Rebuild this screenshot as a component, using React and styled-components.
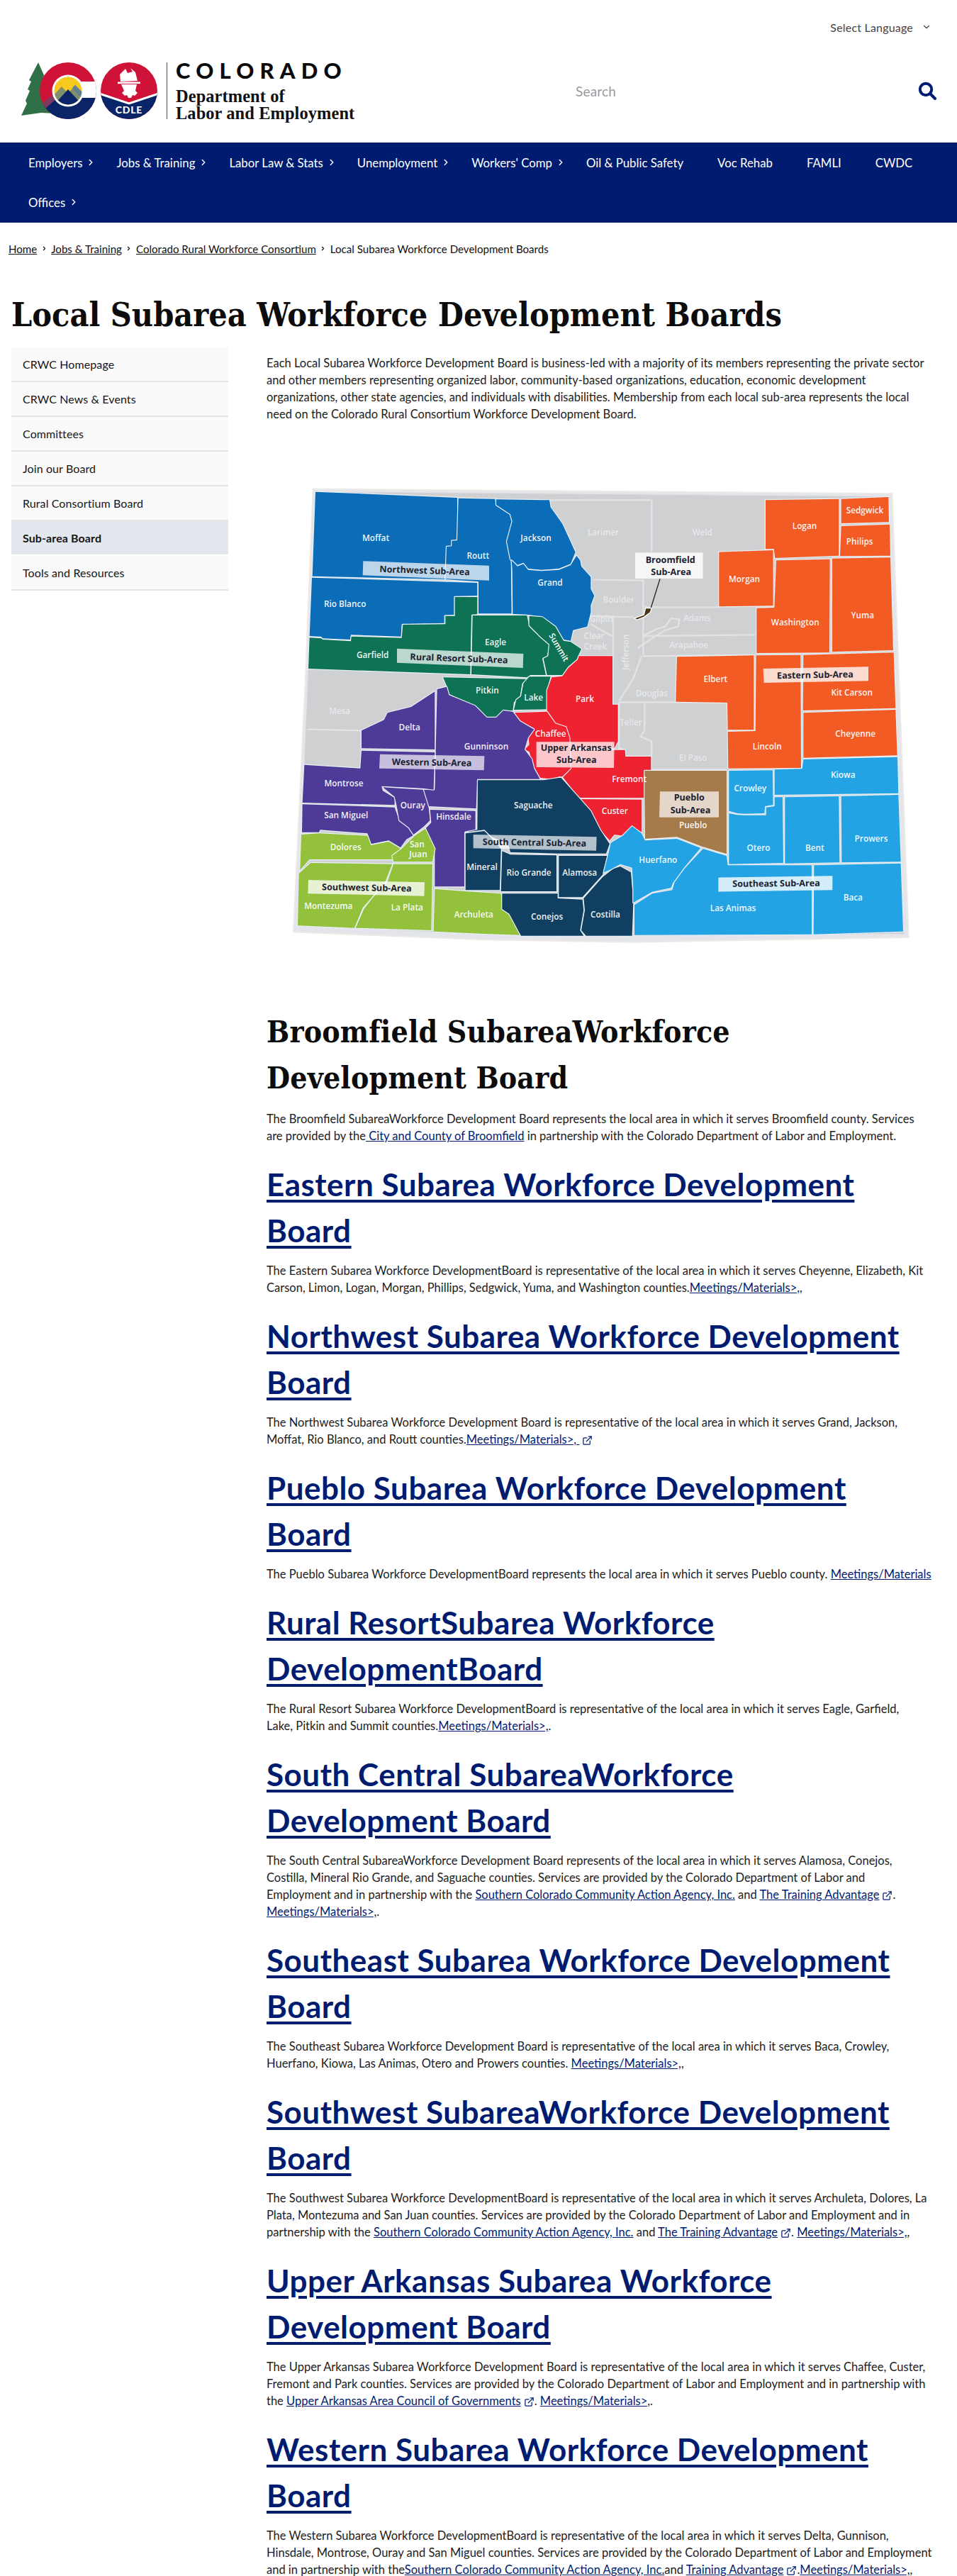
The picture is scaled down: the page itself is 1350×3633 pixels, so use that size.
import React from 'react';
import styled, { createGlobalStyle } from 'styled-components';
import { ChevronRight, ChevronDown, ExternalLink } from 'lucide-react';

const NAVY = '#001c70';

const Global = createGlobalStyle`
  html, body { margin: 0; padding: 0; background: #fff; }
  body { font-family: "Lato", "Liberation Sans", sans-serif; font-size: 16.5px; color: #1c1c1c; }
`;

const Page = styled.div`width: 1350px; height: 3633px; overflow: hidden;`;
const TopBar = styled.div`height: 76px; display: flex; justify-content: flex-end; align-items: center; gap: 12px; padding-right: 36px; color: #444; font-size: 16px; letter-spacing: .2px;`;
const Header = styled.header`height: 125px; padding: 12px 29px 33px 30px; box-sizing: border-box; display: flex; align-items: center; justify-content: space-between;`;
const Brand = styled.div`display: flex; align-items: stretch; height: 80px;`;
const Divider = styled.div`width: 1px; background: #555; margin: 0 12px 0 0;`;
const BrandText = styled.div`display: flex; flex-direction: column; margin-top: -1px;`;
const StateName = styled.div`font-family: "Lato", sans-serif; font-weight: 900; font-size: 31px; line-height: 24px; letter-spacing: 8.2px; color: #0b0b0b; margin-bottom: 13px;`;
const Dept = styled.div`font-family: "Liberation Serif", serif; font-weight: 700; font-size: 24.4px; line-height: 24px; letter-spacing: .1px; color: #111; white-space: nowrap;`;
const SearchBox = styled.div`width: 509px; display: flex; align-items: center; justify-content: space-between;`;
const SearchHint = styled.span`color: #9a9a9a; font-size: 19px; letter-spacing: .2px;`;

const Nav = styled.nav`background: ${NAVY}; display: flex; flex-wrap: wrap; padding: 0 16px; height: 113px; box-sizing: border-box; align-content: flex-start;`;
const NavItem = styled.a`height: 56px; display: flex; align-items: center; padding: 0 24px; color: #fff; white-space: nowrap; font-size: 16.8px;`;
const NavChevron = styled(ChevronRight)`width: 14px; height: 14px; margin: 0 -19px 0 5px; flex: none;`;
const NavWrap = styled.div`flex-basis: 100%; height: 0;`;

const Crumbs = styled.div`display: flex; align-items: center; gap: 5.5px; padding: 25px 12px 0; height: 48px; box-sizing: border-box; line-height: 24px; color: #111; font-size: 15.1px;`;
const CrumbLink = styled.a`color: #111; text-decoration: underline;`;
const Title = styled.h1`font-family: "DejaVu Serif Condensed", "DejaVu Serif", serif; font-size: 46.3px; font-weight: 700; line-height: 60px; letter-spacing: 0; margin: 0; padding: 52px 16px 16px; color: #0c0c0c;`;

const Body = styled.div`display: grid; grid-template-columns: 306px 940px; column-gap: 54px; padding-left: 16px;`;
const Side = styled.ul`list-style: none; margin: 0; padding: 0; align-self: start; font-size: 16px; letter-spacing: .1px;`;
const SideItem = styled.li`height: 49px; box-sizing: border-box; display: flex; align-items: center; padding-left: 16px; background: ${p => (p.$active ? '#e3e7ee' : '#fafafa')}; border-bottom: 2px solid ${p => (p.$active ? '#fff' : '#e4e4e4')}; font-weight: ${p => (p.$active ? 700 : 400)}; color: #161616;`;

const Main = styled.main`display: block;`;
const Intro = styled.p`margin: 10px 0 0; line-height: 24px; width: 932px;`;
const MapSvg = styled.svg`display: block; width: 920px; height: 670px; margin: 71px 0 86px 24px;`;

const Section = styled.section`margin-bottom: 24px;`;
const PlainHead = styled.h2`font-family: "DejaVu Serif Condensed", "DejaVu Serif", serif; font-size: 42.4px; font-weight: 700; line-height: 65px; letter-spacing: .15px; margin: 0 0 13px; width: 700px; color: #0c0c0c;`;
const LinkHead = styled.h2`font-size: 44px; font-weight: 700; line-height: 65px; letter-spacing: .5px; margin: 0 0 12px; width: 935px;`;
const HeadLink = styled.a`color: ${NAVY}; text-decoration: underline; text-decoration-thickness: 4px; text-underline-offset: 5px;`;
const Para = styled.p`margin: 0; line-height: 24px; width: 932px; white-space: ${p => (p.$nowrap ? 'nowrap' : 'normal')};`;
const A = styled.a`color: ${NAVY}; text-decoration: underline;`;
const ExtIcon = styled(ExternalLink)`width: 15px; height: 15px; margin: 0 0 -3px 4px; color: ${NAVY};`;

const Ext = () => <ExtIcon strokeWidth={2} />;
const Meet = ({ children }) => <A>{children || 'Meetings/Materials>,'}</A>;

const state = '135,80 2560,100 2625,1950 1480,1958 850,1952 60,1915 105,828 110,690';
const regions = [
  ['#0b6cb8', ['135,80 735,105 735,285 712,287 712,310 690,312 685,450 122,437',
    '740,107 895,110 900,135 960,175 968,205 945,290 962,350 965,595 825,595 825,460 685,450 690,312 712,310 712,287 735,285',
    '900,112 1125,115 1130,145 1180,215 1235,335 1215,385 1165,405 1090,410 1035,405 1015,380 990,390 960,365 945,290 968,205 960,175 900,135',
    '965,370 990,395 1015,385 1035,410 1090,415 1165,410 1215,390 1240,350 1255,370 1260,395 1300,440 1300,490 1315,520 1300,560 1300,590 1285,650 1225,665 1215,710 1185,705 1150,650 1095,610 1035,600 970,597 968,410',
    '120,443 820,465 820,520 722,522 722,600 680,602 680,635 500,640 497,692 285,685 283,705 165,700 160,693 110,690']],
  ['#0d7354', ['110,697 160,700 165,705 285,712 287,692 500,698 505,642 685,640 685,605 725,605 725,525 820,525 820,598 795,600 790,852 105,828',
    '800,603 1030,603 1040,650 1090,700 1125,730 1115,775 1095,785 1110,855 1045,855 1030,865 795,852',
    '1040,605 1095,610 1150,650 1185,710 1215,715 1260,745 1240,790 1205,820 1180,855 1115,855 1100,785 1120,775 1125,725 1090,695 1040,645',
    '675,865 1030,872 1010,890 1000,950 975,970 970,1005 930,1005 900,1035 860,1035 825,995 810,985 700,935 690,900',
    '1040,862 1110,862 1130,862 1115,920 1115,1000 975,1002 985,960 1005,945 1015,890']],
  ['#ee2230', ['1135,865 1180,860 1205,825 1245,790 1250,775 1392,775 1392,980 1415,980 1415,1135 1400,1165 1215,1165 1195,1075 1150,1060 1115,1020 1115,920',
    '1400,1172 1445,1172 1447,1200 1555,1200 1555,1375 1250,1375 1180,1285 1215,1250 1210,1172',
    '975,1015 1115,1010 1150,1060 1195,1075 1210,1120 1215,1250 1180,1285 1165,1285 1140,1295 1085,1290 1060,1250 1040,1180 1020,1170 1040,1150 1035,1110 1060,1080 1000,1050',
    '1255,1380 1515,1382 1515,1520 1475,1495 1435,1535 1400,1530 1380,1555 1340,1510 1300,1430']],
  ['#4e3a97', ['330,1090 425,1045 440,1015 540,990 640,925 640,1170 330,1165',
    '650,915 690,905 700,940 810,985 860,1035 900,1035 930,1005 970,1010 1000,1050 1060,1085 1035,1120 1020,1170 1050,1210 1060,1250 1085,1295 820,1295 815,1420 610,1410 590,1340 640,1340',
    '330,1175 640,1182 635,1340 595,1335 415,1325 420,1345 470,1375 470,1405 80,1395 88,1235 325,1250',
    '80,1402 470,1415 490,1470 530,1500 555,1530 520,1550 495,1585 445,1555 370,1570 355,1525 155,1510 150,1520 78,1520',
    '420,1330 590,1340 615,1420 620,1470 595,1495 550,1530 530,1500 490,1470 478,1405 470,1370',
    '620,1425 812,1430 812,1510 765,1520 765,1750 640,1750 640,1590 600,1505 625,1480']],
  ['#93c13c', ['75,1530 150,1525 355,1535 370,1575 445,1560 495,1590 460,1635 110,1635 70,1680',
    '600,1505 640,1590 630,1645 465,1645 460,1620 500,1590 555,1535',
    '65,1695 115,1650 460,1655 430,1730 370,1800 335,1840 300,1925 60,1915',
    '465,1655 630,1655 625,1935 305,1925 340,1845 375,1800 440,1730',
    '640,1760 765,1770 920,1780 925,1845 955,1870 1000,1955 850,1950 635,1940']],
  ['#113f61', ['822,1300 1100,1300 1165,1290 1175,1290 1300,1430 1340,1510 1380,1570 1365,1610 1160,1610 960,1605 950,1570 880,1540 850,1510 770,1520 820,1510',
    '770,1525 850,1515 880,1545 920,1590 915,1765 770,1765 770,1640',
    '925,1600 960,1615 1155,1618 1155,1770 920,1770',
    '1165,1620 1370,1620 1350,1700 1265,1795 1165,1795',
    '925,1780 1160,1780 1160,1800 1265,1805 1270,1850 1255,1935 1270,1958 1005,1958 955,1865 925,1845',
    '1270,1800 1350,1710 1395,1675 1425,1665 1470,1690 1475,1750 1480,1820 1475,1958 1280,1958 1260,1935 1275,1850']],
  ['#a67b4a', ['1528,1260 1875,1260 1875,1612 1770,1580 1665,1540 1530,1548 1528,1380']],
  ['#f35b25', ['2040,115 2350,110 2350,350 2080,360 2075,322 2040,322',
    '2360,110 2560,102 2562,208 2360,213',
    '2360,225 2565,218 2568,350 2355,352',
    '1843,335 2072,327 2072,562 1843,565',
    '2085,370 2312,365 2310,760 2002,762 2002,572 2077,570',
    '2322,362 2568,358 2580,750 2322,757',
    '1665,778 1990,772 1990,1087 1880,1087 1878,972 1660,968',
    '2000,772 2188,770 2190,1248 1882,1250 1880,1095 1997,1092',
    '2200,770 2582,760 2590,995 2198,1005',
    '2200,1015 2590,1002 2597,1195 2200,1205']],
  ['#23a3e3', ['2078,1255 2195,1252 2200,1212 2598,1202 2602,1355 2078,1362',
    '1885,1260 2070,1258 2072,1405 2038,1410 2035,1440 1950,1442 1920,1440 1885,1430',
    '1885,1440 1920,1447 1950,1448 2042,1448 2042,1415 2078,1410 2078,1372 2112,1372 2115,1650 1885,1655',
    '2122,1372 2350,1368 2353,1648 2122,1652',
    '2360,1368 2602,1362 2612,1645 2362,1648',
    '2245,1660 2612,1652 2622,1940 2243,1952',
    '1485,1828 1560,1780 1645,1765 1655,1730 1700,1670 1775,1590 1875,1620 1880,1660 2235,1660 2235,1952 1485,1955',
    '1385,1565 1435,1535 1475,1495 1515,1525 1530,1555 1665,1548 1765,1587 1695,1670 1648,1735 1640,1755 1560,1772 1480,1818 1480,1760 1475,1670 1425,1655 1380,1680 1355,1690 1375,1610']],
];
const greyLines = [
  '1558,115 1558,335', '1310,452 1520,455', '1522,450 1522,770', '1295,605 1480,610', '1525,568 1843,568',
  '1520,690 1995,685', '1520,775 1995,770', '1395,610 1395,775', '1515,775 1480,870 1420,965', '1300,640 1390,690',
  '1420,970 1875,970', '1528,975 1528,1090 1510,1115 1558,1135 1558,1200', '1558,1255 1875,1255',
  '1520,690 1580,660 1615,650 1640,615 1675,620 1670,650 1615,665 1560,700 1500,740',
  '1125,115 1558,115', '330,1090 100,1085', '1420,970 1420,1165 1445,1172',
];
const names = [
  ['Moffat',390,287],['Routt',823,364],['Jackson',1068,288],['Grand',1128,476],['Rio Blanco',260,567],['Eagle',897,730],['Garfield',377,783],
  ['Pitkin',862,932],['Lake',1058,964],['Park',1275,970],['Delta',533,1088],['Gunninson',858,1170],['Chaffee',1130,1115],
  ['Elbert',1828,884],['Morgan',1950,462],['Logan',2205,236],['Sedgwick',2460,170],['Philips',2438,302],['Washington',2165,645],['Yuma',2450,614],
  ['Kit Carson',2405,941],['Cheyenne',2420,1115],['Lincoln',2047,1170],['Kiowa',2368,1290],['Crowley',1975,1348],['Prowers',2487,1560],['Otero',2010,1598],
  ['Bent',2248,1598],['Baca',2410,1810],['Las Animas',1902,1855],['Huerfano',1585,1650],['Pueblo',1733,1502],['Fremont',1463,1308],['Custer',1402,1443],
  ['Saguache',1057,1418],['Montrose',255,1325],['Ouray',547,1418],['San Miguel',265,1460],['Hinsdale',720,1468],['Dolores',263,1597],['San',565,1583],['Juan',570,1627],
  ['Mineral',840,1680],['Rio Grande',1038,1703],['Alamosa',1253,1703],['Montezuma',190,1846],['La Plata',523,1850],['Archuleta',805,1880],['Conejos',1115,1890],['Costilla',1362,1880],
];
const greyNames = [['Larimer',1353,265],['Weld',1772,265],['Boulder',1418,548],['Gilpin',1345,630],['Clear',1315,703],['Creek',1320,748],['Mesa',237,1020],['Teller',1470,1068],['El Paso',1733,1218],['Douglas',1558,945],['Adams',1750,626],['Arapahoe',1715,742]];
const tags = [
  { pts: '337,373 870,392 870,455 335,433', lines: [['Northwest Sub-Area', 597, 426, 2]], a: .72 },
  { pts: '480,743 1015,765 1013,825 480,803', lines: [['Rural Resort Sub-Area', 742, 798, 2]], a: .72 },
  { pts: '1488,337 1775,337 1775,447 1488,447', lines: [['Broomfield', 1637, 380, 0], ['Sub-Area', 1640, 433, 0]], a: .8 },
  { pts: '2030,828 2475,820 2475,880 2033,888', lines: [['Eastern Sub-Area', 2250, 868, -1]], a: .78 },
  { pts: '408,1190 850,1198 848,1258 405,1250', lines: [['Western Sub-Area', 627, 1238, 1]], a: .68 },
  { pts: '1070,1138 1400,1138 1398,1248 1070,1245', lines: [['Upper Arkansas', 1238, 1175, 0], ['Sub-Area', 1240, 1228, 0]], a: .75 },
  { pts: '1593,1348 1842,1348 1842,1457 1590,1457', lines: [['Pueblo', 1717, 1387, 0], ['Sub-Area', 1722, 1440, 0]], a: .7 },
  { pts: '803,1530 1325,1540 1323,1598 803,1588', lines: [['South Central Sub-Area', 1062, 1577, 1]], a: .68 },
  { pts: '105,1722 597,1732 595,1790 103,1780', lines: [['Southwest Sub-Area', 352, 1768, 1]], a: .78 },
  { pts: '1840,1712 2323,1705 2323,1765 1840,1772', lines: [['Southeast Sub-Area', 2085, 1750, -.5]], a: .8 },
];
const px = v => Math.round((v / 3) * 10) / 10;

function CountyMap() {
  return (
    <MapSvg viewBox="0 0 920 670" fontFamily='"Open Sans", sans-serif'>
      <g transform="scale(.33333)">
        <polygon points="125,68 2575,88 2645,1965 1480,1985 850,1975 42,1942 95,825 100,690" fill="#e3e5ea" stroke="#ece9e6" strokeWidth="6" />
        <polygon points={state} fill="#cfd0d2" />
        {greyLines.map(l => <polyline key={l} points={l} fill="none" stroke="#e2e3e5" strokeWidth="7" />)}
        {regions.map(([c, ps]) => ps.map(p => <polygon key={p} points={p} fill={c} stroke="#e9f0f6" strokeWidth="7" strokeLinejoin="round" paintOrder="stroke" />))}
        <polygon points="1485,615 1525,600 1532,572 1558,572 1552,590 1525,610 1495,622" fill="#4a3316" stroke="#fff" strokeWidth="4" />
        <line x1="1593" y1="448" x2="1555" y2="570" stroke="#222" strokeWidth="4" />
        {tags.map(tag => <polygon key={tag.pts} points={tag.pts} fill="#fff" fillOpacity={tag.a} />)}
      </g>
      {greyNames.map(([t, x, y]) => <text key={t} x={px(x)} y={px(y)} textAnchor="middle" fontSize="11.6" fontWeight="600" fill="#e7e8ea">{t}</text>)}
      <text transform="translate(487,278) rotate(-90)" fontSize="11.6" fontWeight="600" fill="#e7e8ea">Jefferson</text>
      {names.map(([t, x, y]) => <text key={t + x} x={px(x)} y={px(y)} textAnchor="middle" fontSize="11.8" fontWeight="600" fill="#fff" fillOpacity=".95">{t}</text>)}
      <text transform="translate(374,229) rotate(60)" fontSize="11.6" fontWeight="600" fill="#fff">Summit</text>
      {tags.map(tag => tag.lines.map(([t, x, y, r]) => <text key={t + x} x={px(x)} y={px(y)} transform={`rotate(${r} ${px(x)} ${px(y)})`} textAnchor="middle" fontSize="12.6" fontWeight="700" fill="#1b2230">{t}</text>))}
    </MapSvg>
  );
}

function Emblem() {
  return (
    <svg width="205" height="80" viewBox="0 0 205 80">
      <defs>
        <clipPath id="inner"><circle cx="66" cy="40" r="19.5" /></clipPath>
        <clipPath id="ring"><circle cx="66" cy="40" r="40" /></clipPath>
        <clipPath id="seal"><circle cx="152" cy="40" r="40" /></clipPath>
      </defs>
      <polygon points="24,0 32,18 30,28 38,42 48,72 28,71 0,75 8,58 6,54 12,40 9,38 14,27 11,25" fill="#2f7049" />
      <circle cx="66" cy="40" r="40" fill="#cf1237" />
      <g clipPath="url(#ring)">
        <polygon points="24,66 46,50 110,50 110,82 24,82" fill="#0a2468" />
        <polygon points="24,62 44,46 49,52 28,70" fill="#7c3b5f" />
        <rect x="84" y="27" width="24" height="23" fill="#fff" />
      </g>
      <circle cx="66" cy="40" r="22.5" fill="#fff" />
      <g clipPath="url(#inner)">
        <rect x="46" y="20" width="40" height="40" fill="#f7c81e" />
        <polygon points="46,46 57,34 66,44 76,32 86,42 86,60 46,60" fill="#7f8e6c" />
        <polygon points="72,36 76,32 86,42 86,52" fill="#5f7f96" />
        <polygon points="46,60 66,38 86,60" fill="#0a2468" />
      </g>
      <circle cx="152" cy="40" r="40" fill="#cf1237" />
      <g clipPath="url(#seal)">
        <polygon points="110,44 152,58 194,44 194,82 110,82" fill="#0a2468" />
        <polyline points="110,44 152,58 194,44" fill="none" stroke="#fff" strokeWidth="3" />
      </g>
      <path d="M140 27 L139 17 L147 9 L150 15 L157 13 L154 8 L161 14 L164 26 Z" fill="#fff" />
      <rect x="136" y="27.5" width="32" height="2.6" fill="#fff" />
      <path d="M141 31 h22 l-2 9 l3 3 l-4 4 l-3 -1 l-2 4 h-4 l-2 -4 l-3 1 l-4 -4 l3 -3 Z" fill="#fff" />
      <text x="152" y="72" textAnchor="middle" fontFamily='"Lato", sans-serif' fontWeight="900" fontSize="14" letterSpacing=".8" fill="#fff">CDLE</text>
    </svg>
  );
}

const Magnifier = () => (
  <svg width="26" height="26" viewBox="0 0 26 26" fill="none" stroke={NAVY}>
    <circle cx="11" cy="11" r="8.2" strokeWidth="4" />
    <line x1="17" y1="17" x2="24" y2="24" strokeWidth="4" strokeLinecap="round" />
  </svg>
);

const navTop = [['Employers', 1], ['Jobs & Training', 1], ['Labor Law & Stats', 1], ['Unemployment', 1], ["Workers' Comp", 1], ['Oil & Public Safety'], ['Voc Rehab'], ['FAMLI'], ['CWDC']];
const sideLinks = ['CRWC Homepage', 'CRWC News & Events', 'Committees', 'Join our Board', 'Rural Consortium Board', 'Sub-area Board', 'Tools and Resources'];

export default function App() {
  return (
    <Page>
      <Global />
      <TopBar>Select Language <ChevronDown size={14} strokeWidth={2} color="#444" /></TopBar>
      <Header>
        <Brand>
          <Emblem />
          <Divider />
          <BrandText>
            <StateName>COLORADO</StateName>
            <Dept>Department of</Dept>
            <Dept>Labor and Employment</Dept>
          </BrandText>
        </Brand>
        <SearchBox><SearchHint>Search</SearchHint><Magnifier /></SearchBox>
      </Header>
      <Nav>
        {navTop.map(([t, c]) => (
          <NavItem key={t}>{t}{c && <NavChevron strokeWidth={2.4} />}</NavItem>
        ))}
        <NavWrap />
        <NavItem>Offices<NavChevron strokeWidth={2.4} /></NavItem>
      </Nav>
      <Crumbs>
        <CrumbLink>Home</CrumbLink><ChevronRight size={9} strokeWidth={3} />
        <CrumbLink>Jobs &amp; Training</CrumbLink><ChevronRight size={9} strokeWidth={3} />
        <CrumbLink>Colorado Rural Workforce Consortium</CrumbLink><ChevronRight size={9} strokeWidth={3} />
        <span>Local Subarea Workforce Development Boards</span>
      </Crumbs>
      <Title>Local Subarea Workforce Development Boards</Title>
      <Body>
        <Side>
          {sideLinks.map(s => <SideItem key={s} $active={s === 'Sub-area Board'}>{s}</SideItem>)}
        </Side>
        <Main>
          <Intro>Each Local Subarea Workforce Development Board is business-led with a majority of its members representing the private sector and other members representing organized labor, community-based organizations, education, economic development organizations, other state agencies, and individuals with disabilities. Membership from each local sub-area represents the local need on the Colorado Rural Consortium Workforce Development Board.</Intro>
          <CountyMap />
          <Section>
            <PlainHead>Broomfield SubareaWorkforce Development Board</PlainHead>
            <Para>The Broomfield SubareaWorkforce Development Board represents the local area in which it serves Broomfield county. Services are provided by the<A> City and County of Broomfield</A> in partnership with the Colorado Department of Labor and Employment.</Para>
          </Section>
          <Section>
            <LinkHead><HeadLink>Eastern Subarea Workforce Development Board</HeadLink></LinkHead>
            <Para>The Eastern Subarea Workforce DevelopmentBoard is representative of the local area in which it serves Cheyenne, Elizabeth, Kit Carson, Limon, Logan, Morgan, Phillips, Sedgwick, Yuma, and Washington counties.<Meet />,</Para>
          </Section>
          <Section>
            <LinkHead><HeadLink>Northwest Subarea Workforce Development Board</HeadLink></LinkHead>
            <Para>The Northwest Subarea Workforce Development Board is representative of the local area in which it serves Grand, Jackson, Moffat, Rio Blanco, and Routt counties.<A>Meetings/Materials&gt;, <Ext /></A></Para>
          </Section>
          <Section>
            <LinkHead><HeadLink>Pueblo Subarea Workforce Development Board</HeadLink></LinkHead>
            <Para $nowrap>The Pueblo Subarea Workforce DevelopmentBoard represents the local area in which it serves Pueblo county. <Meet>Meetings/Materials</Meet></Para>
          </Section>
          <Section>
            <LinkHead><HeadLink>Rural ResortSubarea Workforce DevelopmentBoard</HeadLink></LinkHead>
            <Para>The Rural Resort Subarea Workforce DevelopmentBoard is representative of the local area in which it serves Eagle, Garfield, Lake, Pitkin and Summit counties.<Meet />.</Para>
          </Section>
          <Section>
            <LinkHead><HeadLink>South Central SubareaWorkforce Development Board</HeadLink></LinkHead>
            <Para>The South Central SubareaWorkforce Development Board represents of the local area in which it serves Alamosa, Conejos, Costilla, Mineral Rio Grande, and Saguache counties. Services are provided by the Colorado Department of Labor and Employment and in partnership with the <A>Southern Colorado Community Action Agency, Inc.</A> and <A>The Training Advantage<Ext /></A>. <Meet />.</Para>
          </Section>
          <Section>
            <LinkHead><HeadLink>Southeast Subarea Workforce Development Board</HeadLink></LinkHead>
            <Para>The Southeast Subarea Workforce Development Board is representative of the local area in which it serves Baca, Crowley, Huerfano, Kiowa, Las Animas, Otero and Prowers counties. <Meet />,</Para>
          </Section>
          <Section>
            <LinkHead><HeadLink>Southwest SubareaWorkforce Development Board</HeadLink></LinkHead>
            <Para>The Southwest Subarea Workforce DevelopmentBoard is representative of the local area in which it serves Archuleta, Dolores, La Plata, Montezuma and San Juan counties. Services are provided by the Colorado Department of Labor and Employment and in partnership with the <A>Southern Colorado Community Action Agency, Inc.</A> and <A>The Training Advantage<Ext /></A>. <Meet />,</Para>
          </Section>
          <Section>
            <LinkHead><HeadLink>Upper Arkansas Subarea Workforce Development Board</HeadLink></LinkHead>
            <Para>The Upper Arkansas Subarea Workforce Development Board is representative of the local area in which it serves Chaffee, Custer, Fremont and Park counties. Services are provided by the Colorado Department of Labor and Employment and in partnership with the <A>Upper Arkansas Area Council of Governments<Ext /></A>. <Meet />.</Para>
          </Section>
          <Section>
            <LinkHead><HeadLink>Western Subarea Workforce Development Board</HeadLink></LinkHead>
            <Para $nowrap>The Western Subarea Workforce DevelopmentBoard is representative of the local area in which it serves Delta, Gunnison,<br />Hinsdale, Montrose, Ouray and San Miguel counties. Services are provided by the Colorado Department of Labor and Employment<br />and in partnership with the<A>Southern Colorado Community Action Agency, Inc.</A>and <A>Training Advantage<Ext /></A>.<Meet />,</Para>
          </Section>
        </Main>
      </Body>
    </Page>
  );
}
